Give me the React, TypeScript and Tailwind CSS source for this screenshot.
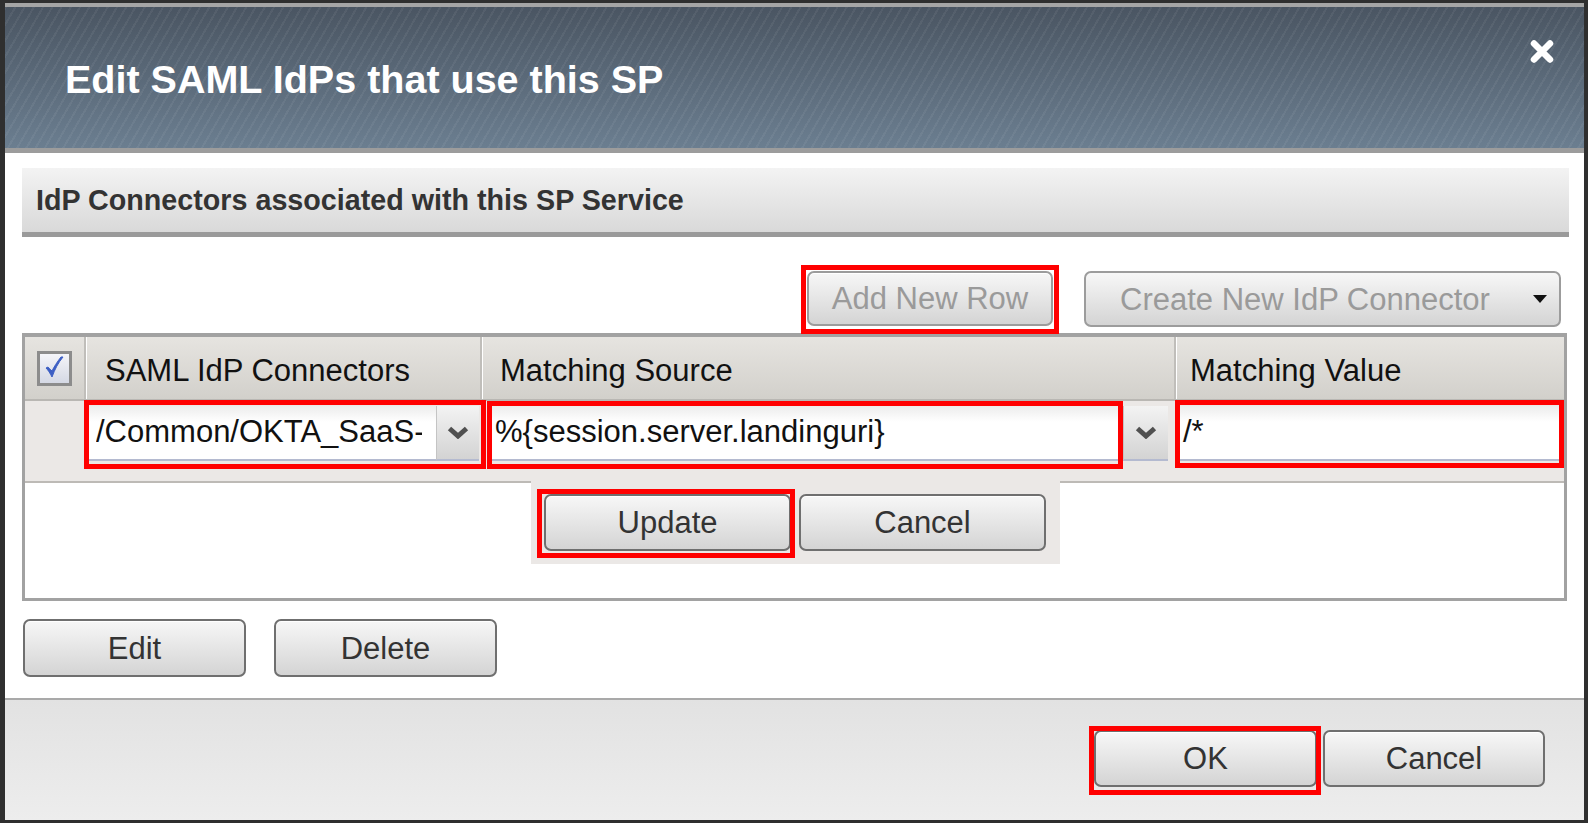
import type { ReactNode } from "react";

function RedBox({ className }: { className: string }) {
    return <span className={"pointer-events-none absolute border-[5px] border-[#ff0000] " + className} />;
}

function Btn({
    children,
    className = "",
    disabled = false,
}: {
    children: ReactNode;
    className?: string;
    disabled?: boolean;
}) {
    return (
        <button
            type="button"
            className={
                "flex items-center justify-center rounded-[7px] border-2 bg-[linear-gradient(to_bottom,#f7f7f7,#d4d4d4)] text-[31px] leading-none shadow-[inset_0_1px_0_#ffffff] " +
                (disabled ? "border-[#9c9c9c] text-[#9a9a9a] " : "border-[#6f6f6f] text-[#333333] ") +
                className
            }
        >
            {children}
        </button>
    );
}

function Chevron() {
    return (
        <svg width="22" height="13" viewBox="0 0 22 13">
            <path d="M2.5 2.5 L11 10 L19.5 2.5" fill="none" stroke="#505050" strokeWidth="5" strokeLinejoin="miter" />
        </svg>
    );
}

function ArrowBox({ className = "" }: { className?: string }) {
    return (
        <div
            className={
                "flex h-[55px] items-center justify-center border-b-2 border-l border-b-[#b4bad0] border-l-[#c4c4c4] bg-[linear-gradient(to_bottom,#f3f3f3,#d3d3d3)] " +
                className
            }
        >
            <Chevron />
        </div>
    );
}

export default function App() {
    return (
        <div className="h-[824px] w-[1592px] bg-white font-['Liberation_Sans',Arial,sans-serif]">
            <div className="flex h-[823px] w-[1588px] flex-col border-b-[3px] border-l-[5px] border-r-[4px] border-t-[3px] border-[#2f2f2f]">
                {/* Title bar */}
                <div className="flex h-[150px] shrink-0 items-center justify-between border-b-[5px] border-t-4 border-b-[#9c9c9c] border-t-[#a5a5a5] bg-[image:repeating-linear-gradient(120deg,rgba(255,255,255,0.055)_0px,rgba(255,255,255,0.055)_2px,transparent_2px,transparent_8px),linear-gradient(to_bottom,#4a5562,#6b7e90)] pl-[60px] pr-[29px]">
                    <h1 className="pt-[5px] text-[39.5px] font-bold text-white">Edit SAML IdPs that use this SP</h1>
                    <svg className="mt-[32px] self-start" width="26" height="25" viewBox="0 0 26 25">
                        <path d="M5 4.5 L21 20.5 M21 4.5 L5 20.5" stroke="#fff" strokeWidth="6.5" strokeLinecap="round" />
                    </svg>
                </div>

                {/* Body */}
                <div className="flex flex-1 flex-col bg-white pl-[17px] pr-[15px] pt-[15px]">
                    <div className="flex h-[69px] items-center border-b-[5px] border-[#9a9a9a] bg-[linear-gradient(to_bottom,#f3f3f3,#d9d9d9)] pl-[14px]">
                        <span className="pt-[2px] text-[28.7px] font-bold text-[#333333]">IdP Connectors associated with this SP Service</span>
                    </div>

                    <div className="mt-[34px] flex items-start justify-end gap-[31px] pr-[8px]">
                        <div className="relative">
                            <Btn disabled className="h-[55px] w-[246px]">
                                Add New Row
                            </Btn>
                            <RedBox className="-bottom-[8px] -left-[6px] -right-[6px] -top-[6px]" />
                        </div>
                        <button
                            type="button"
                            className="flex h-[56px] w-[477px] items-center justify-between rounded-[7px] border-2 border-[#9c9c9c] bg-[linear-gradient(to_bottom,#f7f7f7,#d4d4d4)] pl-[34px] pr-[12px] text-[31px] leading-none text-[#9a9a9a]"
                        >
                            Create New IdP Connector
                            <svg width="14" height="8" viewBox="0 0 14 8">
                                <path d="M0 0 H14 L7 8 Z" fill="#111" />
                            </svg>
                        </button>
                    </div>

                    {/* Table */}
                    <div className="mr-[2px] mt-[6px] border-x-[3px] border-b-[3px] border-t-4 border-[#a2a2a2]">
                        <div className="grid h-[64px] grid-cols-[61px_396px_694px_1fr] border-b-2 border-[#b9b7b3] text-[31px] text-[#111]">
                            <div className="flex items-center justify-center border-r-2 border-[#c0beba] bg-[linear-gradient(to_bottom,#e6e4e0,#d2d0cb)]">
                                <svg width="35" height="35" viewBox="0 0 35 35">
                                    <defs>
                                        <linearGradient id="cb" x1="0" y1="0" x2="0" y2="1">
                                            <stop offset="0" stopColor="#f6f6fa" />
                                            <stop offset="1" stopColor="#d3d7e3" />
                                        </linearGradient>
                                    </defs>
                                    <rect x="1.5" y="1.5" width="32" height="32" fill="url(#cb)" stroke="#8c8c8c" strokeWidth="3" />
                                    <path d="M9 17 C11 19 13 22 15 26 C18 18 21 12 26 6 L24 6 C20 11 17 16 15 20 C13 18 12 17 11 16 Z" fill="#3d5fc4" stroke="#3d5fc4" strokeWidth="1" strokeLinejoin="round" />
                                </svg>
                            </div>
                            <div className="flex items-center border-l border-r-2 border-l-white border-r-[#c0beba] bg-[linear-gradient(to_bottom,#e6e4e0,#d2d0cb)] pl-[18px] pt-[6px]">
                                SAML IdP Connectors
                            </div>
                            <div className="flex items-center border-l border-r-2 border-l-white border-r-[#c0beba] bg-[linear-gradient(to_bottom,#e6e4e0,#d2d0cb)] pl-[17px] pt-[6px]">
                                Matching Source
                            </div>
                            <div className="flex items-center border-l border-l-white bg-[linear-gradient(to_bottom,#e6e4e0,#d2d0cb)] pl-[13px] pt-[6px]">
                                Matching Value
                            </div>
                        </div>

                        {/* Row being edited */}
                        <div className="flex h-[80px] items-start bg-[#ebe8e6] pt-[5px] text-[31px] text-[#111]">
                            <div className="relative ml-[64px] flex w-[390px]">
                                <div className="flex h-[55px] flex-1 items-center overflow-hidden whitespace-nowrap border-b-2 border-[#b4bad0] bg-[linear-gradient(to_bottom,#ececec,#ffffff_30%)] pl-[7px] pr-[14px]">
                                    <span className="overflow-hidden">/Common/OKTA_SaaS-SP</span>
                                </div>
                                <ArrowBox className="w-[43px]" />
                                <RedBox className="-bottom-[8px] -left-[5px] -right-[7px] -top-[6px]" />
                            </div>
                            <div className="relative ml-[12px] w-[629px]">
                                <div className="flex h-[55px] items-center whitespace-nowrap border-b-2 border-[#b4bad0] bg-[linear-gradient(to_bottom,#ececec,#ffffff_30%)] pl-[4px]">
                                    %{"{"}session.server.landinguri{"}"}
                                </div>
                                <RedBox className="-bottom-[8px] -left-[4px] -right-[3px] -top-[5px]" />
                            </div>
                            <ArrowBox className="ml-[3px] w-[45px]" />
                            <div className="relative ml-[12px] w-[380px]">
                                <div className="flex h-[55px] items-center border-b-2 border-[#b4bad0] bg-[linear-gradient(to_bottom,#ececec,#ffffff_30%)] pl-[3px]">
                                    /*
                                </div>
                                <RedBox className="-bottom-[7px] -left-[5px] -right-[4px] -top-[6px]" />
                            </div>
                        </div>

                        {/* Update / Cancel strip */}
                        <div className="flex h-[117px] items-start">
                            <div className="h-full w-[506px] border-t-2 border-[#bdbab6]" />
                            <div className="flex h-[83px] w-[529px] items-start gap-[8px] bg-[#ebe8e6] pl-[13px] pt-[13px]">
                                <div className="relative">
                                    <Btn className="h-[57px] w-[247px]">Update</Btn>
                                    <RedBox className="-bottom-[7px] -left-[7px] -right-[4px] -top-[5px]" />
                                </div>
                                <Btn className="h-[57px] w-[247px]">Cancel</Btn>
                            </div>
                            <div className="h-full flex-1 border-t-2 border-[#bdbab6]" />
                        </div>
                    </div>

                    <div className="ml-[1px] mt-[18px] flex gap-[28px]">
                        <Btn className="h-[58px] w-[223px]">Edit</Btn>
                        <Btn className="h-[58px] w-[223px]">Delete</Btn>
                    </div>
                </div>

                {/* Footer */}
                <div className="flex h-[122px] shrink-0 items-start justify-end gap-[6px] border-t-2 border-[#a9a9a9] bg-[linear-gradient(to_bottom,#e2e2e2,#ededed)] pr-[39px] pt-[30px]">
                    <div className="relative">
                        <Btn className="h-[57px] w-[223px]">OK</Btn>
                        <RedBox className="-bottom-[8px] -left-[5px] -right-[4px] -top-[4px]" />
                    </div>
                    <Btn className="h-[57px] w-[222px]">Cancel</Btn>
                </div>
            </div>
        </div>
    );
}
